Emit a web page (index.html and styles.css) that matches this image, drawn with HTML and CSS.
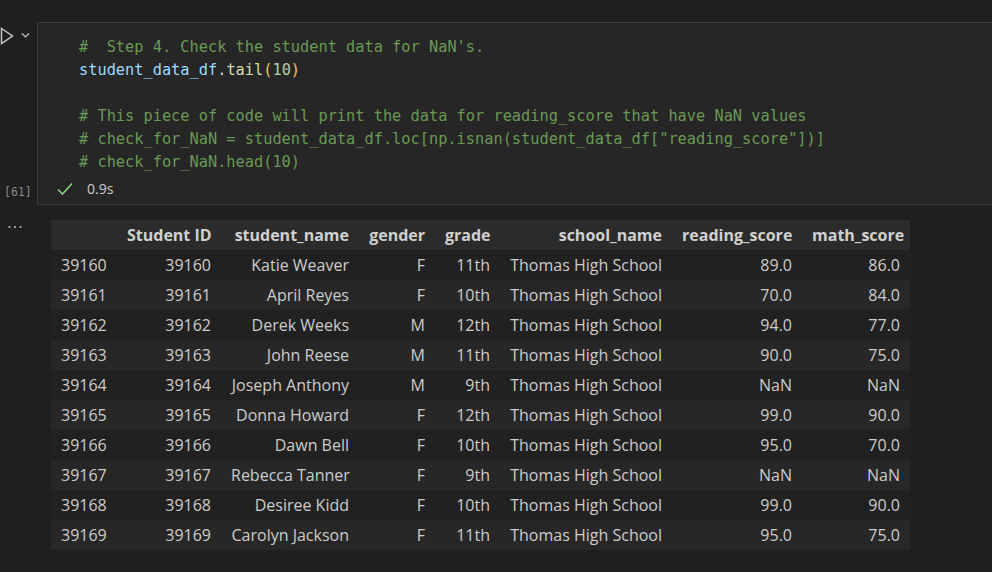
FILE: index.html
```html
<!DOCTYPE html>
<html>
<head>
<meta charset="utf-8">
<link rel="stylesheet" href="styles.css">
</head>
<body>
<div class="cell">
  <div class="gutter">
    <div class="run">
      <svg width="36" height="18" viewBox="0 0 36 18">
        <polygon points="1.5,1.5 12.5,9 1.5,16.5" fill="none" stroke="#c5c5c5" stroke-width="1.5" stroke-linejoin="miter"/>
        <polyline points="22,6.5 25.5,10 29,6.5" fill="none" stroke="#c5c5c5" stroke-width="1.2"/>
      </svg>
    </div>
    <div class="count">[61]</div>
  </div>
  <div class="editor">
    <pre class="code"><span class="c">#  Step 4. Check the student data for NaN's.</span>
<span class="v">student_data_df</span><span class="p">.</span><span class="f">tail</span><span class="b">(</span><span class="n">10</span><span class="b">)</span>

<span class="c"># This piece of code will print the data for reading_score that have NaN values</span>
<span class="c"># check_for_NaN = student_data_df.loc[np.isnan(student_data_df["reading_score"])]</span>
<span class="c"># check_for_NaN.head(10)</span></pre>
    <div class="status">
      <svg class="check" width="16" height="14" viewBox="0 0 16 14">
        <polyline points="1,7.5 5.5,12 15,1.5" fill="none" stroke="#89d185" stroke-width="1.6"/>
      </svg>
      <span class="time">0.9s</span>
    </div>
  </div>
</div>
<div class="output">
  <div class="out-gutter">
    <svg width="20" height="6" viewBox="0 0 20 6">
      <circle cx="9.5" cy="3" r="1.1" fill="#bbbbbb"/>
      <circle cx="15" cy="3" r="1.1" fill="#bbbbbb"/>
      <circle cx="20.5" cy="3" r="1.1" fill="#bbbbbb"/>
    </svg>
  </div>
  <table class="df">
    <colgroup>
      <col class="w-idx"><col class="w-sid"><col class="w-name"><col class="w-gender"><col class="w-grade"><col class="w-school"><col class="w-read"><col class="w-math">
    </colgroup>
    <thead>
      <tr><th></th><th>Student ID</th><th>student_name</th><th>gender</th><th>grade</th><th>school_name</th><th>reading_score</th><th>math_score</th></tr>
    </thead>
    <tbody>
      <tr><td class="idx">39160</td><td>39160</td><td>Katie Weaver</td><td>F</td><td>11th</td><td>Thomas High School</td><td>89.0</td><td>86.0</td></tr>
      <tr><td class="idx">39161</td><td>39161</td><td>April Reyes</td><td>F</td><td>10th</td><td>Thomas High School</td><td>70.0</td><td>84.0</td></tr>
      <tr><td class="idx">39162</td><td>39162</td><td>Derek Weeks</td><td>M</td><td>12th</td><td>Thomas High School</td><td>94.0</td><td>77.0</td></tr>
      <tr><td class="idx">39163</td><td>39163</td><td>John Reese</td><td>M</td><td>11th</td><td>Thomas High School</td><td>90.0</td><td>75.0</td></tr>
      <tr><td class="idx">39164</td><td>39164</td><td>Joseph Anthony</td><td>M</td><td>9th</td><td>Thomas High School</td><td>NaN</td><td>NaN</td></tr>
      <tr><td class="idx">39165</td><td>39165</td><td>Donna Howard</td><td>F</td><td>12th</td><td>Thomas High School</td><td>99.0</td><td>90.0</td></tr>
      <tr><td class="idx">39166</td><td>39166</td><td>Dawn Bell</td><td>F</td><td>10th</td><td>Thomas High School</td><td>95.0</td><td>70.0</td></tr>
      <tr><td class="idx">39167</td><td>39167</td><td>Rebecca Tanner</td><td>F</td><td>9th</td><td>Thomas High School</td><td>NaN</td><td>NaN</td></tr>
      <tr><td class="idx">39168</td><td>39168</td><td>Desiree Kidd</td><td>F</td><td>10th</td><td>Thomas High School</td><td>99.0</td><td>90.0</td></tr>
      <tr><td class="idx">39169</td><td>39169</td><td>Carolyn Jackson</td><td>F</td><td>11th</td><td>Thomas High School</td><td>95.0</td><td>75.0</td></tr>
    </tbody>
  </table>
</div>
</body>
</html>
```

FILE: styles.css
```css
html, body {
  margin: 0;
  padding: 0;
  background: #1f1f1f;
  overflow: hidden;
  width: 992px;
  height: 572px;
}
body {
  font-family: "Open Sans", "Noto Sans", sans-serif;
  color: #cccccc;
}
.cell {
  display: flex;
  margin-top: 22px;
  height: 183px;
}
.gutter {
  width: 37px;
  flex: none;
  display: flex;
  flex-direction: column;
  justify-content: space-between;
}
.run {
  padding-top: 5px;
  height: 18px;
}
.run svg { display: block; }
.count {
  font-family: "DejaVu Sans Mono", monospace;
  font-size: 11.5px;
  color: #8b8b8b;
  padding-left: 4px;
  margin-bottom: 6px;
  line-height: 14px;
}
.editor {
  flex: 1;
  margin-right: -20px;
  background: #262626;
  border: 1px solid #3b3b3b;
  display: flex;
  flex-direction: column;
}
.code {
  margin: 0;
  padding: 13px 0 0 41px;
  font-family: "DejaVu Sans Mono", monospace;
  font-size: 15.3px;
  line-height: 23px;
  color: #d4d4d4;
  height: 137px;
}
.c { color: #6a9955; }
.v { color: #9cdcfe; }
.p { color: #d4d4d4; }
.f { color: #dcdcaa; }
.b { color: #e8c85a; }
.n { color: #b5cea8; }
.status {
  display: flex;
  align-items: center;
  padding-left: 19px;
  height: 29px;
  margin-top: 1px;
}
.check { display: block; }
.time {
  margin-left: 14px;
  font-size: 14px;
  color: #cccccc;
}
.output {
  display: flex;
  padding-top: 15px;
}
.out-gutter {
  width: 51px;
  flex: none;
  padding-top: 4px;
}
.out-gutter svg { display: block; overflow: visible; }
.df {
  border-collapse: collapse;
  table-layout: fixed;
  width: 859px;
  font-size: 16px;
}
.w-idx { width: 66px; }
.w-sid { width: 104px; }
.w-name { width: 138px; }
.w-gender { width: 76px; }
.w-grade { width: 65px; }
.w-school { width: 172px; }
.w-read { width: 130px; }
.w-math { width: 108px; }
.df th, .df td {
  height: 30px;
  padding: 0 10px;
  text-align: right;
  white-space: nowrap;
  line-height: 30px;
}
.df th {
  font-weight: 700;
  color: #d0d0d0;
  background: #2b2b2b;
}
.df td.idx { text-align: left; }
.df tbody tr:nth-child(even) { background: #272727; }
.df tbody tr:nth-child(odd) { background: #212121; }
```
